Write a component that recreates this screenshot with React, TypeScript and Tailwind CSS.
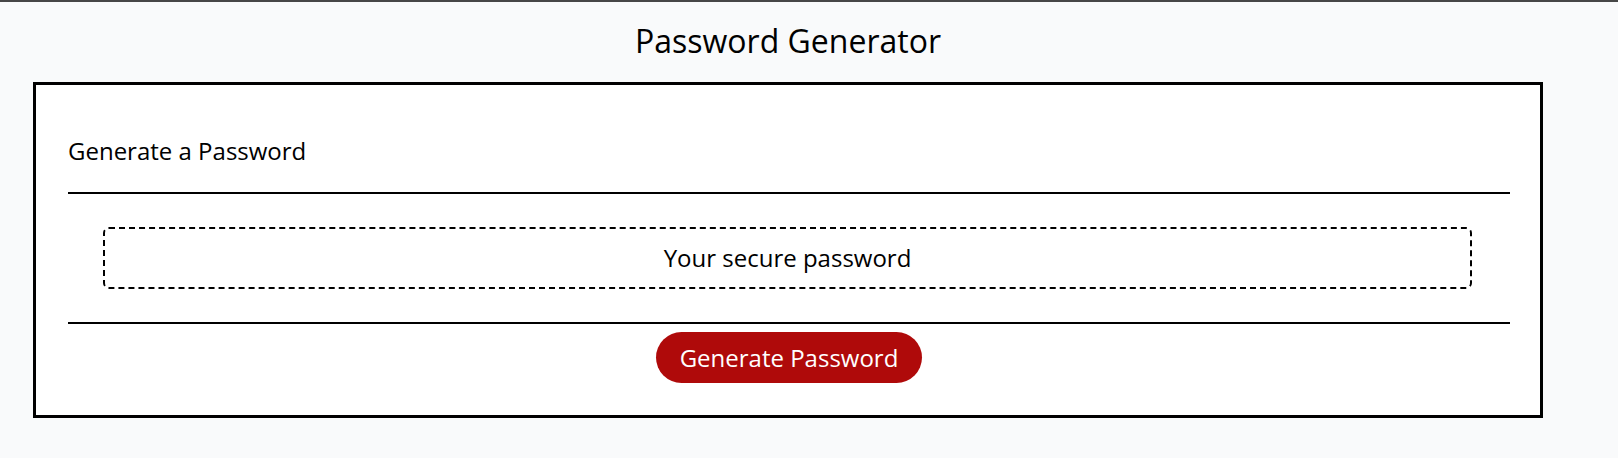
import React from "react";

export default function App() {
  return (
    <div
      className="min-h-screen bg-[#f9fafb] text-black"
      style={{ fontFamily: '"Open Sans", "Noto Sans", sans-serif' }}
    >
      <div className="h-[2px] bg-[#474747]" />
      <div className="w-[1576px]">
        <h1 className="mt-[17px] text-center text-[32px] leading-[44px] font-normal">
          Password Generator
        </h1>
        <div className="mx-[33px] mt-[19px] border-[3px] border-black bg-white pl-[32px] pr-[30px] pt-[50px] pb-[32px]">
          <h2 className="text-[24px] leading-[32px] font-normal">Generate a Password</h2>
          <div className="mt-[25px] h-[2px] bg-black" />
          <div className="mt-[33px] ml-[35px] mr-[38px] flex h-[62px] items-center justify-center rounded-[6px] border-2 border-dashed border-black">
            <span className="text-[24px] leading-[32px]">Your secure password</span>
          </div>
          <div className="mt-[33px] h-[2px] bg-black" />
          <div className="mt-[8px] flex justify-center">
            <button className="flex h-[51px] items-center rounded-full bg-[#af0a0a] px-[24px] text-[24px] leading-[32px] text-white">
              Generate Password
            </button>
          </div>
        </div>
      </div>
    </div>
  );
}
